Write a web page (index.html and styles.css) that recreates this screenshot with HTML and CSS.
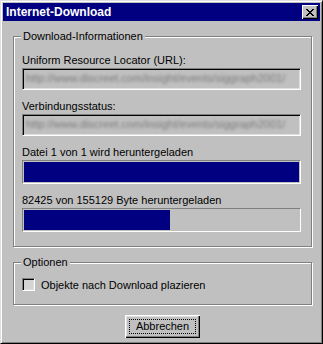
FILE: index.html
```html
<!DOCTYPE html>
<html lang="de">
<head>
    <meta charset="UTF-8">
    <title>Internet-Download</title>
    <link rel="stylesheet" href="styles.css">
</head>
<body>
<div class="window">
    <div class="titlebar">
        <span class="title">Internet-Download</span>
        <span class="close">
            <svg width="8" height="7" viewBox="0 0 8 7" shape-rendering="crispEdges">
                <path d="M0 0h2v1h-2zM6 0h2v1h-2zM1 1h2v1h-2zM5 1h2v1h-2zM2 2h4v1h-4zM3 3h2v1h-2zM2 4h4v1h-4zM1 5h2v1h-2zM5 5h2v1h-2zM0 6h2v1h-2zM6 6h2v1h-2z" fill="#000"/>
            </svg>
        </span>
    </div>
    <div class="content">
        <fieldset class="group info">
            <legend>Download-Informationen</legend>
            <label class="first">Uniform Resource Locator (URL):</label>
            <div class="edit"><span>http://www.discreet.com/insight/events/siggraph2001/</span></div>
            <label>Verbindungsstatus:</label>
            <div class="edit"><span>http://www.discreet.com/insight/events/siggraph2001/</span></div>
            <label>Datei 1 von 1 wird heruntergeladen</label>
            <div class="progress"><i class="fill" style="width: 100%"></i></div>
            <label>82425 von 155129 Byte heruntergeladen</label>
            <div class="progress"><i class="fill" style="width: 53%"></i></div>
        </fieldset>
        <fieldset class="group options">
            <legend>Optionen</legend>
            <div class="check"><span class="box"></span>Objekte nach Download plazieren</div>
        </fieldset>
        <div class="actions">
            <button class="btn"><span>Abbrechen</span></button>
        </div>
    </div>
</div>
</body>
</html>
```

FILE: styles.css
```css
* {
    box-sizing: border-box;
}

body {
    margin: 0;
    background: #c0c0c0;
    font-family: "Liberation Sans", Arial, sans-serif;
    font-size: 11px;
    color: #000;
}

.window {
    width: 323px;
    height: 344px;
    background: #c0c0c0;
    border: 1px solid;
    border-color: #dfdfdf #000 #000 #dfdfdf;
    box-shadow: inset 1px 1px #fff, inset -1px -1px #808080;
    padding: 2px;
    display: flex;
    flex-direction: column;
}

.titlebar {
    height: 18px;
    background: #000080;
    color: #fff;
    display: flex;
    align-items: center;
    justify-content: space-between;
    padding: 0 2px 0 3px;
}

.titlebar .title {
    font-weight: bold;
    font-size: 12px;
}

.close {
    width: 16px;
    height: 14px;
    background: #c0c0c0;
    display: flex;
    align-items: center;
    justify-content: center;
    box-shadow: inset 1px 1px #fff, inset -1px -1px #000, inset -2px -2px #808080;
}

.content {
    flex: 1;
    padding: 8px 8px 0 10px;
    display: flex;
    flex-direction: column;
}

.group {
    margin: 0;
    padding: 0 10px 14px 8px;
    border: 1px solid #808080;
    box-shadow: inset 1px 1px #fff, 1px 1px #fff;
    min-width: 0;
}

.group legend {
    padding: 0 2px;
    margin-left: -1px;
    line-height: 14px;
    background: #c0c0c0;
}

.info label {
    display: block;
    line-height: 14px;
    margin: 9px 0 1px;
}

.info label.first {
    margin-top: 10px;
}

.edit {
    height: 22px;
    border: 1px solid;
    border-color: #808080 #fff #fff #808080;
    box-shadow: inset 1px 1px #000, inset -1px -1px #dfdfdf;
    overflow: hidden;
    white-space: nowrap;
    padding: 3px 2px 3px 3px;
}

.edit span {
    display: inline-block;
    font-size: 11px;
    color: #7a7a7a;
    filter: blur(1.4px);
}

.progress {
    height: 24px;
    border: 1px solid;
    border-color: #808080 #fff #fff #808080;
    padding: 1px;
}

.progress .fill {
    display: block;
    height: 100%;
    background: #000080;
}

.options {
    margin-top: 8px;
    padding-bottom: 13px;
}

.check {
    display: flex;
    align-items: center;
    gap: 6px;
    margin-top: 9px;
}

.check .box {
    width: 13px;
    height: 13px;
    border: 1px solid;
    border-color: #808080 #fff #fff #808080;
    box-shadow: inset 1px 1px #000, inset -1px -1px #dfdfdf;
    background: #d4d4d4;
}

.actions {
    display: flex;
    justify-content: center;
    padding-top: 10px;
}

.btn {
    width: 75px;
    height: 23px;
    border: 0;
    background: #c0c0c0;
    font: inherit;
    color: #000;
    padding: 4px;
    box-shadow: inset 1px 1px #fff, inset -1px -1px #000, inset -2px -2px #808080, inset 2px 2px #dfdfdf;
}

.btn span {
    display: block;
    height: 100%;
    border: 1px dotted #000;
    line-height: 13px;
}
```
